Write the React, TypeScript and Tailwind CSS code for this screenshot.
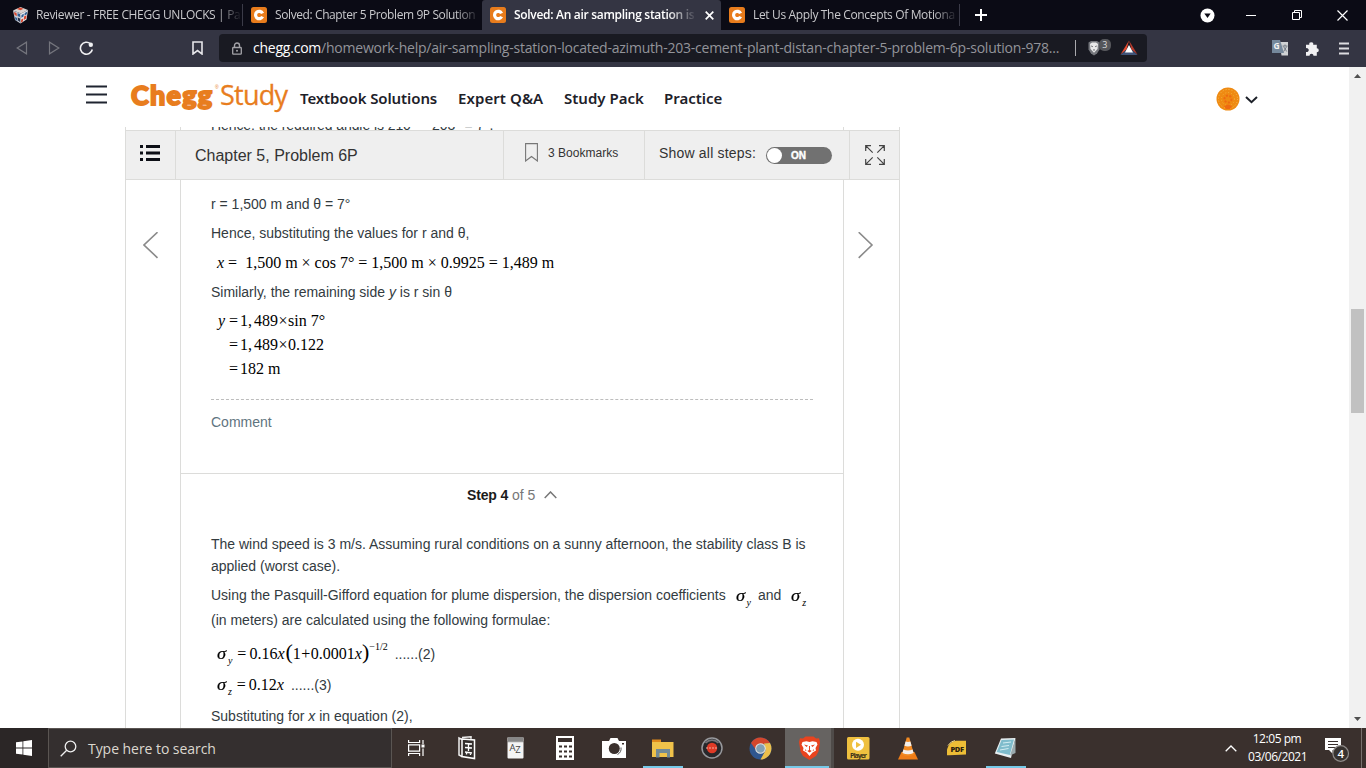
import type { ReactNode } from 'react'

interface TabProps {
  title: string
  icon: ReactNode
  active?: boolean
  divider?: boolean
  textClass: string
}

function CheggIcon() {
  return (
    <svg width="16" height="16" viewBox="0 0 16 16" className="shrink-0">
      <rect width="16" height="16" rx="2.5" fill="#e87c1c" />
      <path d="M11.600 6.400A3.700 3.700 0 1 0 11.600 9.600" fill="none" stroke="#fff" strokeWidth="3.200" />
    </svg>
  )
}

function CubeIcon() {
  return (
    <svg width="17" height="17" viewBox="0 0 17 17" className="shrink-0">
      <path d="M8.5 0 16 3 9 6.5 1 3.5Z" fill="#d9d4d2" />
      <path d="M1 3.5 9 6.5 8.5 16.5 3 13Z" fill="#c7ccd6" />
      <path d="M9 6.5 16 3 14.5 12.5 8.5 16.5Z" fill="#e4e6ea" />
      <path d="m8 .5 3.500 1.200-3 1.500-3.500-1.200ZM2 5l2.500 1 .4 3-2.300-1ZM12 9.500l2.500-1.300-.4 3.300-2.300 1.500ZM9.200 12.500l2-1-.3 3-2 1.300Z" fill="#d8472f" />
      <path d="m5.500 6.300 2.500.8v3L5.600 9ZM3 10l2 1 .3 3L3.400 12.500ZM9.500 8l2.300-1.200-.3 2.700-2.200 1.200ZM12.700 6l2.400-1.200-.3 2.500-2.300 1.200Z" fill="#2f5f93" />
      <path d="m5.700 10.500 2.300 1v3.500L6 13.600Z" fill="#222c44" />
    </svg>
  )
}

function Tab({ title, icon, active = false, divider = false, textClass }: TabProps) {
  return (
    <div
      className={
        active
          ? 'flex h-[30px] w-[239px] shrink-0 items-center rounded-t-[3px] bg-[#343543] pl-2'
          : 'flex h-[30px] w-[239px] shrink-0 items-center pl-2'
      }
    >
      {icon}
      <div
        className={`ml-[7px] overflow-hidden whitespace-nowrap text-[12px] leading-[18px] ${textClass}`}
      >
        {title}
      </div>
      {active && (
        <svg width="9" height="9" viewBox="0 0 9 9" className="ml-auto mr-[7px] shrink-0">
          <path d="m.7.7 7.600 7.600M8.300.7.7 8.300" stroke="#fff" strokeWidth="1.700" />
        </svg>
      )}
      {divider && <div className="ml-auto h-[22px] w-px shrink-0 bg-[#3b3b48]" />}
    </div>
  )
}

function TabStrip() {
  return (
    <div className="flex h-[30px] items-center bg-[#0b0b15] font-['Open_Sans',sans-serif]">
      <div className="flex w-[243px] shrink-0 items-center pl-1">
        <Tab
          title="Reviewer - FREE CHEGG UNLOCKS | Pa"
          icon={<CubeIcon />}
          divider
          textClass="w-[206px] text-[#c9c9cc] tracking-[-0.350px] [mask-image:linear-gradient(to_right,black_88%,transparent)]"
        />
      </div>
      <Tab
        title="Solved: Chapter 5 Problem 9P Solution"
        icon={<CheggIcon />}
        textClass="w-[206px] pl-px text-[#c9c9cc] tracking-[-0.400px] [mask-image:linear-gradient(to_right,black_88%,transparent)]"
      />
      <Tab
        title="Solved: An air sampling station is"
        icon={<CheggIcon />}
        active
        textClass="w-[184px] pl-px font-semibold text-white tracking-[-0.300px] [mask-image:linear-gradient(to_right,black_84%,transparent)]"
      />
      <Tab
        title="Let Us Apply The Concepts Of Motiona"
        icon={<CheggIcon />}
        divider
        textClass="w-[206px] pl-px text-[#c9c9cc] tracking-[-0.350px] [mask-image:linear-gradient(to_right,black_88%,transparent)]"
      />
      <svg width="12" height="12" viewBox="0 0 12 12" className="ml-[15px] shrink-0">
        <path d="M6 0v12M0 6h12" stroke="#fff" strokeWidth="2" />
      </svg>
      <div className="ml-auto flex items-center">
        <svg width="15" height="15" viewBox="0 0 15 15" className="mr-[31px]">
          <circle cx="7.500" cy="7.500" r="7" fill="#fff" />
          <path d="M4.300 5.500h6.400L7.500 10Z" fill="#0b0b15" />
        </svg>
        <svg width="10" height="10" viewBox="0 0 10 10" className="mr-9">
          <path d="M0 5.500h10" stroke="#fff" />
        </svg>
        <svg width="10" height="10" viewBox="0 0 10 10" className="mr-[35px]">
          <path d="M.5 2.500h7v7h-7ZM2.500 2.500v-2h7v7h-2" fill="none" stroke="#fff" />
        </svg>
        <svg width="11" height="11" viewBox="0 0 11 11" className="mr-[18px]">
          <path d="m.5.5 10 10m0-10-10 10" stroke="#fff" strokeWidth="1.200" />
        </svg>
      </div>
    </div>
  )
}

function Toolbar() {
  return (
    <div className="flex h-[37px] items-center bg-[#343543] pb-px font-['Open_Sans',sans-serif]">
      <svg width="12" height="14" viewBox="0 0 12 14" className="ml-4 shrink-0">
        <path d="M10.500 1.200v11.600L1.200 7Z" fill="none" stroke="#74757d" strokeWidth="1.200" />
      </svg>
      <svg width="12" height="14" viewBox="0 0 12 14" className="ml-5 shrink-0">
        <path d="M1.500 1.200v11.600L10.800 7Z" fill="none" stroke="#74757d" strokeWidth="1.200" />
      </svg>
      <svg width="15" height="15" viewBox="0 0 15 15" className="ml-[19px] shrink-0">
        <path d="M11.500 2.800A6 6 0 1 0 13.300 8.500" fill="none" stroke="#f0f0f2" strokeWidth="1.600" />
        <circle cx="11.800" cy="3.700" r="2.200" fill="#f0f0f2" />
      </svg>
      <svg width="11" height="14" viewBox="0 0 11 14" className="ml-[98px] shrink-0">
        <path d="M1 1h9v12L5.500 9.500 1 13Z" fill="none" stroke="#e6e6ea" strokeWidth="1.600" />
      </svg>
      <div className="ml-[16px] flex h-[28px] w-[928px] shrink-0 items-center rounded-[4px] bg-[#191a22]">
        <svg width="10" height="13" viewBox="0 0 10 13" className="ml-[13px] shrink-0">
          <path d="M2.500 5.500V3.500a2.500 2.500 0 0 1 5 0v2" fill="none" stroke="#a3a3a8" strokeWidth="1.400" />
          <rect x=".7" y="5.500" width="8.600" height="6.700" rx=".8" fill="none" stroke="#a3a3a8" strokeWidth="1.300" />
          <circle cx="5" cy="8.800" r="1" fill="#a3a3a8" />
        </svg>
        <div className="ml-[11px] w-[815px] shrink-0 whitespace-nowrap text-[14px] leading-5 tracking-[-0.227px] text-[#93949a]">
          <span className="text-white">chegg.com</span>
          /homework-help/air-sampling-station-located-azimuth-203-cement-plant-distan-chapter-5-problem-6p-solution-978...
        </div>
        <div className="ml-[7px] h-4 w-px bg-[#a9a9ad]" />
        <svg width="25" height="18" viewBox="0 0 25 18" className="ml-[11px]">
          <path d="M1.500 3.500 4 2h6l2.500 1.500v7L10 14.500l-3 2-3-2-2.500-4Z" fill="#75777d" />
          <path d="m3 5 2-1.500h4L11 5l-.5 5L7 13.800 3.500 10Z" fill="#e9e9ea" />
          <path d="m4 6.500 2 .8-1 1ZM10 6.500l-2 .8 1 1ZM6 10.500h2L7 12Z" fill="#44464c" />
          <rect x="12" y="0" width="12" height="12" rx="5" fill="#55565b" />
          <text x="15.200" y="9.200" fontSize="9" fill="#dcdcdc" fontFamily="Open Sans">3</text>
        </svg>
        <svg width="18" height="16" viewBox="0 0 18 16" className="ml-[8px]">
          <path d="M9 .5 6.500 9.500.5 14.500Z" fill="#e5492f" />
          <path d="M9 .5 17.500 14.500l-6-5Z" fill="#b5392b" />
          <path d="M.5 15 6 10h6l5.500 5Z" fill="#3f5378" />
          <path d="m9 5 4 7.500H5Z" fill="#fff" />
        </svg>
      </div>
      <svg width="17" height="16" viewBox="0 0 17 16" className="ml-[125px] shrink-0">
        <path d="M7 2h9v13.500H9.500Z" fill="#cfd1d4" />
        <path d="M0 0h8l4 13H0Z" fill="#75889c" />
        <text x="1.500" y="9" fontSize="8.500" fontWeight="700" fill="#f4f4f4" fontFamily="Open Sans">G</text>
        <path d="M10.500 6h5M13 4.500V6M11.500 6.500l3.200 5M14.700 6.500l-3 5" stroke="#6b7480" strokeWidth=".9" />
      </svg>
      <svg width="15" height="15" viewBox="0 0 15 15" className="ml-[16px] shrink-0">
        <path d="M1 3.700h3.300a2 2 0 1 1 3.900 0h3.600v3.500a2 2 0 1 1 0 4V14.700H8.500a2 2 0 1 0-4 0H1v-3.800a2 2 0 1 0 0-3.700Z" fill="#f1f1f3" />
      </svg>
      <svg width="10" height="13" viewBox="0 0 10 13" className="ml-[19px] shrink-0">
        <path d="M0 1.500h10M0 6.500h10M0 11.500h10" stroke="#dcdce0" strokeWidth="1.800" />
      </svg>
    </div>
  )
}

function SiteHeader() {
  return (
    <header className="flex h-[60px] shrink-0 items-center whitespace-nowrap bg-white">
      <svg width="21" height="19" viewBox="0 0 21 19" className="mb-[6px] ml-[86px] shrink-0">
        <path d="M0 1.500h21M0 9.500h21M0 17.500h21" stroke="#1f2430" strokeWidth="2" />
      </svg>
      <div className="mb-[4px] ml-[24px] flex w-[169px] shrink-0 items-baseline leading-8 text-[#e87d1e]">
        <span className="w-[84px] font-['Lato',sans-serif] text-[27px] font-black tracking-[1.200px] [-webkit-text-stroke:1.800px_#e87d1e]">
          Chegg
        </span>
        <span className="mb-4 w-[5px] self-center text-[5px] leading-3">®</span>
        <span className="font-['Open_Sans',sans-serif] text-[27px] tracking-[-0.750px] [-webkit-text-stroke:0.300px_#e87d1e]">Study</span>
      </div>
      <nav className="mt-[2px] flex font-['Noto_Sans',sans-serif] text-[15px] font-semibold text-[#1d2129]">
        <a className="w-[158px] tracking-[-0.100px]">Textbook Solutions</a>
        <a className="w-[106px] tracking-[0.080px]">Expert Q&amp;A</a>
        <a className="w-[100px]">Study Pack</a>
        <a>Practice</a>
      </nav>
      <svg width="24" height="24" viewBox="0 0 24 24" className="ml-auto mt-1 shrink-0">
        <circle cx="12" cy="12" r="11.500" fill="#ef8a12" />
        <circle cx="12" cy="12" r="9.500" fill="none" stroke="#f7bb4d" strokeWidth="1" strokeDasharray="1 2" />
        <circle cx="12" cy="12" r="6.500" fill="none" stroke="#f5ae3c" strokeWidth="1" strokeDasharray="1 2" />
        <circle cx="12" cy="12" r="3.500" fill="none" stroke="#ee6a12" strokeWidth="2" strokeDasharray="2 1.500" />
        <path d="m8 19 4-1.500 4 1.500-2 3h-4Z" fill="#ee6a12" />
      </svg>
      <svg width="13" height="8" viewBox="0 0 13 8" className="ml-[5px] mr-[91px] mt-[5px] shrink-0">
        <path d="m1 1 5.500 5.200L12 1" fill="none" stroke="#1d2129" strokeWidth="2" />
      </svg>
    </header>
  )
}

function ProblemBar() {
  return (
    <div className="flex h-[50px] shrink-0 border border-[#dcdcda] bg-[#efefef] text-[#333]">
      <div className="flex w-[50px] justify-center border-r border-[#dcdcda] pr-[2px] pt-[14px]">
        <svg width="20" height="16" viewBox="0 0 20 16">
          <path d="M0 1.500h3M6 1.500h14M0 8h3M6 8h14M0 14.500h3M6 14.500h14" stroke="#0d0f16" strokeWidth="3" />
        </svg>
      </div>
      <div className="flex w-[328px] items-center border-r border-[#dcdcda] pl-[19px] pt-[2px] text-[16px]">
        Chapter 5, Problem 6P
      </div>
      <div className="flex w-[141px] border-r border-[#dcdcda] pl-[21px] pt-[12px]">
        <svg width="13" height="19" viewBox="0 0 13 19">
          <path d="M.6.600h11.800v17.400L6.500 13.500.6 18Z" fill="none" stroke="#777" strokeWidth="1.100" />
        </svg>
        <span className="ml-[10px] text-[12px] leading-5 tracking-[0.030px]">3 Bookmarks</span>
      </div>
      <div className="flex w-[205px] border-r border-[#dcdcda] pl-[14px]">
        <span className="w-[107px] pt-[12px] text-[14px] leading-5 tracking-[0.190px]">Show all steps:</span>
        <div className="mt-4 flex h-[17px] w-[66px] items-center rounded-full bg-[#717171]">
          <div className="ml-px size-[15px] rounded-full bg-white" />
          <span className="ml-[9px] text-[10px] font-bold leading-4 text-white [-webkit-text-stroke:0.400px_white]">ON</span>
        </div>
      </div>
      <div className="flex flex-1 items-center justify-center">
        <svg width="20" height="20" viewBox="0 0 20 20">
          <path
            d="M.7 6V.7H6M.7.700l7 7M14 .7h5.300V6M19.300.7l-7 7M.7 14v5.300H6M.7 19.300l7-7M19.300 14v5.300H14M19.300 19.300l-7-7"
            fill="none" stroke="#444" strokeWidth="1.200"
          />
        </svg>
      </div>
    </div>
  )
}

function Sigma({ sub }: { sub: string }) {
  return (
    <span className="font-['Liberation_Serif',serif] italic text-black">
      <span className="inline-block origin-left scale-x-115 text-[16px] leading-none [-webkit-text-stroke:0.200px_black]">σ</span>
      <sub className="ml-[3px] align-[-5px] text-[10px] leading-none [bottom:auto]">{sub}</sub>
    </span>
  )
}

function Solution() {
  return (
    <div className="flex w-[664px] flex-col border-x border-[#dcdcda] text-[14px] leading-[22px] whitespace-nowrap text-[#333b3f]">
      <div className="h-[294px] border-b border-[#dcdcda] px-[30px] pt-[13px]">
        <p className="h-[22px]">r = 1,500 m and θ = 7°</p>
        <p className="mt-[7px] h-[22px]">Hence, substituting the values for r and θ,</p>
        <p className="mt-[8px] h-[22px] pl-[6px] font-['Liberation_Serif',serif] text-[16px] text-black">
          <i>x</i> =&nbsp; 1,500 m × cos 7° = 1,500 m × 0.9925 = 1,489 m
        </p>
        <p className="mt-[7px] h-[22px]">
          Similarly, the remaining side <i>y</i> is r sin θ
        </p>
        <div className="mt-[6px] pl-[7px] font-['Liberation_Serif',serif] text-[16px] leading-6 text-black">
          <p><i className="inline-block w-[11px]">y</i>=<span className="ml-[2px]">1,</span><span className="ml-[2px]">489</span><span className="mx-[0.500px]">×</span>sin&nbsp;7°</p>
          <p className="pl-[11px]">=<span className="ml-[2px]">1,</span><span className="ml-[2px]">489</span><span className="mx-[0.500px]">×</span>0.122</p>
          <p className="pl-[11px]">=<span className="ml-[2px]">182 m</span></p>
        </div>
        <div className="mt-[18px] border-t border-dashed border-[#bdbdbd]" />
        <p className="mt-[11px] text-[#5f7480]">Comment</p>
      </div>
      <div className="mt-[10px] flex h-[22px] items-center pl-[286px] text-[#777]">
        <span className="font-bold tracking-[-0.150px] text-[#1b1b1b]">Step 4</span>&nbsp;of 5
        <svg width="13" height="8" viewBox="0 0 13 8" className="ml-[9px]">
          <path d="m.7 7 5.800-6 5.800 6" fill="none" stroke="#777" strokeWidth="1.500" />
        </svg>
      </div>
      <div className="pl-[30px] pt-[27px]">
        <p>The wind speed is 3 m/s. Assuming rural conditions on a sunny afternoon, the stability class B is</p>
        <p>applied (worst case).</p>
        <p className="mt-[7px] flex h-[22px]">
          Using the Pasquill-Gifford equation for plume dispersion, the dispersion coefficients
          <span className="ml-[10px] mr-[7px] mt-px">
            <Sigma sub="y" />
          </span>
          and
          <span className="ml-[10px] mt-px">
            <Sigma sub="z" />
          </span>
        </p>
        <p className="mt-[3px]">(in meters) are calculated using the following formulae:</p>
        <div className="mt-[10px] flex h-[22px] items-baseline pl-[6px]">
          <Sigma sub="y" />
          <span className="ml-[5px] font-['Liberation_Serif',serif] text-[16px] text-black">
            =<span className="ml-[3px]">0.16</span><i>x</i><span className="ml-px text-[22px] leading-none">(</span>1<span className="mx-[0.500px]">+</span>0.0001<i>x</i><span className="text-[22px] leading-none">)</span>
            <sup className="align-[9px] text-[10px] leading-none [top:auto]">−1/2</sup>
          </span>
          <span className="ml-[7px]">......(2)</span>
        </div>
        <div className="mt-[11px] flex h-[22px] items-baseline pl-[6px]">
          <Sigma sub="z" />
          <span className="ml-[5px] font-['Liberation_Serif',serif] text-[16px] text-black">
            =<span className="ml-[3px]">0.12</span><i>x</i>
          </span>
          <span className="ml-[7px]">......(3)</span>
        </div>
        <p className="mt-[9px]">Substituting for <i>x</i> in equation (2),</p>
      </div>
    </div>
  )
}

function Scrollbar() {
  return (
    <div className="flex w-[17px] shrink-0 flex-col items-center bg-[#f1f1f1]">
      <svg width="7" height="4" viewBox="0 0 7 4" className="mt-[7px]">
        <path d="M0 4 3.500 0 7 4Z" fill="#505050" />
      </svg>
      <div className="mt-[231px] h-[104px] w-[13px] bg-[#c1c1c1]" />
      <svg width="7" height="4" viewBox="0 0 7 4" className="mb-[7px] mt-auto">
        <path d="M0 0h7L3.500 4Z" fill="#505050" />
      </svg>
    </div>
  )
}

interface AppButtonProps {
  children: ReactNode
  running?: boolean
  focused?: boolean
}

function AppButton({ children, running = false, focused = false }: AppButtonProps) {
  return (
    <div className={focused ? 'flex w-[49px] shrink-0 flex-col border-r-[3px] border-[#4f4b49] bg-[#666361]' : 'flex w-[49px] shrink-0 flex-col'}>
      <div className="flex h-[38px] items-center justify-center pt-[2px]">{children}</div>
      <div className={running ? 'mx-auto h-[2px] w-[40px] bg-[#76c9e8]' : focused ? 'h-[2px] w-[44px] bg-[#76c9e8]' : ''} />
    </div>
  )
}

function Taskbar() {
  return (
    <div className="flex h-10 bg-[#3a302d] font-['Open_Sans',sans-serif] text-white">
      <div className="flex w-12 shrink-0 items-center justify-center bg-[#2b2626]">
        <svg width="16" height="16" viewBox="0 0 16 16">
          <path d="M0 2.300 6.500 1.400v6.200H0ZM7.300 1.300 16 0v7.600H7.300ZM0 8.400h6.500v6.200L0 13.700ZM7.300 8.400H16V16l-8.700-1.300Z" fill="#fff" />
        </svg>
      </div>
      <div className="flex w-[344px] shrink-0 items-center border border-[#5a5552] bg-[#342f2f] pl-[11px]">
        <svg width="17" height="17" viewBox="0 0 17 17">
          <circle cx="10.500" cy="6.500" r="5.300" fill="none" stroke="#eee" strokeWidth="1.300" />
          <path d="m6.700 10.300-6 6" stroke="#eee" strokeWidth="1.300" />
        </svg>
        <span className="ml-[11px] text-[14px] tracking-[-0.050px] text-[#dcd8cf]">Type here to search</span>
      </div>
      <AppButton>
        <svg width="17" height="16" viewBox="0 0 17 16">
          <path d="M.6 0v2.500h11V0M.6 16v-2.500h11V16M.6 4.800h11v6.400H.6Z" fill="none" stroke="#fff" strokeWidth="1.200" />
          <path d="M15 0v4M15 8.500V16" stroke="#fff" strokeWidth="1.200" />
          <path d="M13.500 4.500h3v3h-3Z" fill="#fff" />
        </svg>
      </AppButton>
      <div className="ml-px flex">
        <AppButton>
          <svg width="18" height="24" viewBox="0 0 18 24">
            <path d="M4 3.500 1 2v17l3 1.500M4 1.500 13 .8v2" fill="none" stroke="#eee" strokeWidth="1.500" />
            <path d="m4 3 12.500 1v18.500L4 20.500Z" fill="#332e2c" stroke="#fff" strokeWidth="1.500" />
            <path d="M7 7.500 14 8M10.500 8v3M7 11.500l7 .5M10.500 12v3M7 16l7 1M8.500 16.500v2M12.500 17v2" fill="none" stroke="#fff" strokeWidth="1.300" />
          </svg>
        </AppButton>
        <AppButton>
          <svg width="17" height="22" viewBox="0 0 17 22">
            <rect x=".5" y="0" width="16" height="21.500" rx="1" fill="#f4f4f4" />
            <path d="M1 0h15v4H1Z" fill="#878787" />
            <path d="M.5 4.700h16" stroke="#555" strokeWidth=".7" />
            <text x="2.500" y="14" fontSize="9.500" fontFamily="Open Sans" fill="#444">A</text>
            <text x="8.300" y="16" fontSize="9.500" fontFamily="Open Sans" fill="#444">Z</text>
          </svg>
        </AppButton>
        <AppButton>
          <svg width="18" height="24" viewBox="0 0 18 24">
            <path d="M0 0h18v24H0Z" fill="#fff" />
            <path d="M2 2h14v4H2Z" fill="#3a302d" />
            <path d="M3 10.500h3M8 10.500h3M13 10.500h3M3 15.500h3M8 15.500h3M13 15.500h3M3 20.500h3M8 20.500h3M13 20.500h3" stroke="#3a302d" strokeWidth="2" />
          </svg>
        </AppButton>
        <AppButton>
          <svg width="24" height="20" viewBox="0 0 24 20">
            <path d="M0 3h7l1.500-3h7L17 3h7v17H0Z" fill="#fff" />
            <circle cx="12.300" cy="10.500" r="5.500" fill="#3a302d" />
            <path d="M15.500 16.500A6.800 6.800 0 0 0 19 9.500" fill="none" stroke="#555" />
            <path d="M20 5h2v1.500h-2Z" fill="#3a302d" />
          </svg>
        </AppButton>
        <AppButton running>
          <svg width="22" height="19" viewBox="0 0 22 19">
            <path d="M0 .5h9v4H0Z" fill="#e08a1c" />
            <path d="M0 3h21.500v15H0Z" fill="#f0c24a" />
            <path d="M4 10h14v8.500h-3V14H7.500v4.500H4Z" fill="#738a96" />
          </svg>
        </AppButton>
        <AppButton>
          <svg width="22" height="22" viewBox="0 0 22 22">
            <circle cx="11" cy="11" r="10" fill="#27272a" stroke="#97989c" strokeWidth="1.500" />
            <circle cx="11" cy="11" r="5.200" fill="#df3a26" />
            <path d="M5 11h12" stroke="#f4a99e" strokeWidth="1.200" strokeDasharray="2 1" />
            <path d="M4.500 6A9 9 0 0 1 17.500 6" fill="none" stroke="#737478" strokeWidth="1.800" />
          </svg>
        </AppButton>
        <AppButton>
          <svg width="23" height="23" viewBox="0 0 23 23">
            <circle cx="11.500" cy="11.500" r="11" fill="#2f568f" />
            <path d="M2 6A11 11 0 0 1 21 6L11.500 7.500 7 13Z" fill="#d4472c" />
            <path d="M21 6a11 11 0 0 1-9.500 16.500l5-9L15 6.500Z" fill="#edc04c" />
            <circle cx="11.500" cy="11.500" r="5.300" fill="#e6e6e2" />
            <circle cx="11.500" cy="11.500" r="4.300" fill="#83a0b4" />
          </svg>
        </AppButton>
        <AppButton focused>
          <svg width="21" height="24" viewBox="0 0 21 24" className="ml-[2px]">
            <path d="m4 2.500 2.500-2h8L17 2.500l3-.2L21 6l-1.500 9.500L17 20l-6.500 4L4 20 1.500 15.500 0 6l1-3.700Z" fill="#e8441f" />
            <path d="m3.500 6 4-.7 3 .7 3-.7 4 .7 1 2.500-2 3.500.5 2.500-3.500 2-3 3.500-3-3.500-3.500-2 .5-2.500-2-3.500Z" fill="#fff" />
            <path d="m5 8.500 4 1-1.500 1.500ZM16 8.500l-4 1 1.500 1.500ZM10 10h1v4l1.700 1-2.200 1.500L8.300 15l1.700-1ZM6.500 13l1 2-1.500-.5ZM14.500 13l-1 2 1.500-.5Z" fill="#e8441f" />
          </svg>
        </AppButton>
        <AppButton>
          <svg width="23" height="23" viewBox="0 0 23 23">
            <rect width="22.500" height="22.500" rx="1.500" fill="#efc03f" />
            <circle cx="11" cy="7.800" r="6" fill="#fff" />
            <path d="M9 4.800 14 7.800 9 11Z" fill="#efc03f" />
            <text x="3" y="20.500" fontSize="7" fontWeight="700" textLength="17" fontFamily="Open Sans" fill="#3d341a">Player</text>
          </svg>
        </AppButton>
        <AppButton>
          <svg width="20" height="23" viewBox="0 0 20 23">
            <path d="M3.500 15h13L20 22.500H0Z" fill="#ef7d17" />
            <path d="M8.700.5h2.600L16 17.500q-6 3-12 0Z" fill="#f28a22" />
            <path d="m7.600 4.500-1.200 4.200q3.600 1.500 7.200 0l-1.200-4.200q-2.400.9-4.800 0ZM5.400 12.500 4.400 16q5.600 2.600 11.200 0l-1-3.500q-4.600 2-9.200 0Z" fill="#f3efeb" />
          </svg>
        </AppButton>
        <AppButton>
          <svg width="21" height="16" viewBox="0 0 21 16">
            <path d="M1 9.500Q3 2 10 .8H20V14.500L3 15.300H1Z" fill="#edbd36" />
            <path d="M2 5.500Q5 1 9 .6" fill="none" stroke="#f4dc8e" />
            <text x="4.500" y="12" fontSize="7.500" fontWeight="800" textLength="13.500" fontFamily="Open Sans" fill="#2c230f">PDF</text>
          </svg>
        </AppButton>
        <AppButton running>
          <svg width="23" height="22" viewBox="0 0 23 22">
            <path d="M7 1.500 21.500 1 17 21 .8 16.500Z" fill="#e9eff1" />
            <path d="m7.500 3 12.500-.5L15.800 18 2.700 15Z" fill="#7fbccc" />
            <path d="m9 6 8-1M7.500 9.500 15 8.500M6 13l8.500-1.500" stroke="#d3edf2" />
            <path d="m16 18.500 5.500-17V16Z" fill="#9aa9ad" />
          </svg>
        </AppButton>
      </div>
      <div className="ml-auto flex items-center">
        <svg width="12" height="7" viewBox="0 0 12 7" className="mr-[11px]">
          <path d="m.7 6.300 5.300-5.300 5.300 5.300" fill="none" stroke="#fff" strokeWidth="1.300" />
        </svg>
        <div className="w-[58px] whitespace-nowrap text-center text-[12px] leading-[18px] tracking-[-0.450px]">
          <div>12:05 pm</div>
          <div>03/06/2021</div>
        </div>
        <svg width="26" height="26" viewBox="0 0 26 26" className="ml-[19px] mr-[10px] mt-[4px]">
          <path d="M0 1h16v12H7.500v3.500L4 13H0Z" fill="#fff" />
          <path d="M3 4.500h10M3 7.500h10M3 10.500h8" stroke="#3a302d" />
          <circle cx="15.700" cy="16.500" r="7.800" fill="#37322f" stroke="#8e8a88" strokeWidth="1.200" />
          <text x="12.500" y="20.600" fontSize="11.500" fontWeight="600" fontFamily="Open Sans" fill="#fff">4</text>
        </svg>
        <div className="mr-[4px] h-10 w-px bg-[#77716e]" />
      </div>
    </div>
  )
}

export default function App() {
  return (
    <div className="flex h-[768px] w-[1366px] flex-col overflow-hidden bg-white font-['Liberation_Sans',sans-serif]">
      <TabStrip />
      <Toolbar />
      <div className="flex h-[661px] shrink-0">
        <div className="flex flex-1 flex-col">
          <SiteHeader />
          <main className="ml-[125px] flex h-[601px] w-[775px] flex-col overflow-hidden">
            <div className="flex h-[3px] shrink-0 flex-col justify-end overflow-hidden border-x border-[#dcdcda] pl-[54px] pr-[55px]">
              <p className="h-[9px] shrink-0 border-x border-[#dcdcda] pl-[30px] text-[14px] leading-[8px] tracking-[-0.080px] text-[#333b3f]">
                Hence, the required angle is 210° − 203° = 7°.
              </p>
            </div>
            <ProblemBar />
            <div className="flex h-[548px] shrink-0 border-x border-[#dcdcda]">
              <div className="w-[54px] shrink-0 pl-[17px] pt-[52px]">
                <svg width="16" height="27" viewBox="0 0 16 27">
                  <path d="M14.500.2 1 13 14.500 25.800" fill="none" stroke="#8a8a8a" strokeWidth="1.600" />
                </svg>
              </div>
              <Solution />
              <div className="pl-[14px] pt-[52px]">
                <svg width="16" height="27" viewBox="0 0 16 27">
                  <path d="M.7.2 14 13 .7 25.800" fill="none" stroke="#8a8a8a" strokeWidth="1.600" />
                </svg>
              </div>
            </div>
          </main>
        </div>
        <Scrollbar />
      </div>
      <Taskbar />
    </div>
  )
}
